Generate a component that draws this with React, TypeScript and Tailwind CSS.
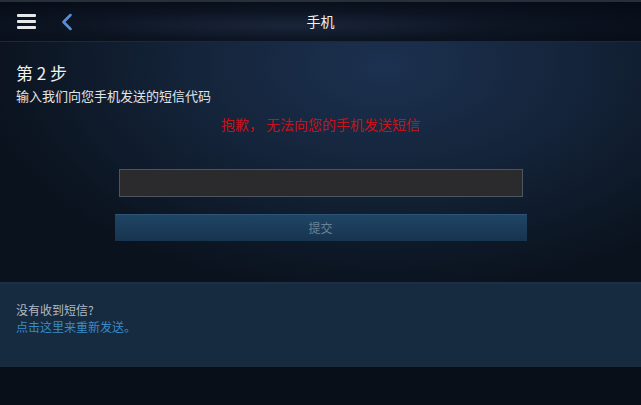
import { ChevronLeft } from "lucide-react";

const font = { fontFamily: '"Noto Sans CJK SC", "Liberation Sans", sans-serif' };

export default function App() {
  return (
    <div className="flex h-[405px] w-[641px] flex-col overflow-hidden bg-[#090f18]" style={font}>
      {/* header */}
      <div className="h-[2px] bg-[#272f3a]" />
      <div className="relative flex h-[40px] items-center border-b border-[#1b2a3b] bg-[radial-gradient(ellipse_at_45%_60%,#1a2539_0%,#0c1422_45%,#050b14_100%)] px-[17px]">
        <div className="flex w-[19px] flex-col gap-[3px]">
          <span className="h-[3px] rounded-[1px] bg-[#e6e8ea]" />
          <span className="h-[3px] rounded-[1px] bg-[#e6e8ea]" />
          <span className="h-[3px] rounded-[1px] bg-[#e6e8ea]" />
        </div>
        <ChevronLeft className="ml-[17px] text-[#5a8fd8]" size={28} strokeWidth={2.2} />
        <div className="absolute inset-x-0 top-0 flex h-full items-center justify-center text-[14px] text-[#eef0f2]">
          手机
        </div>
      </div>

      {/* main */}
      <div className="flex h-[240px] flex-col bg-[radial-gradient(ellipse_at_60%_10%,#1c3150_0%,#14243a_35%,#0a121d_75%)]">
        <div className="px-4 pt-[20px]">
          <div className="text-[17px] leading-[22px] text-[#eef0f2]">第 2 步</div>
          <div className="mt-[3px] text-[13px] leading-[18px] text-[#e2e5e8]">输入我们向您手机发送的短信代码</div>
        </div>
        <div className="mt-[10px] text-center text-[14px] leading-[18px] text-[#c8121a]">抱歉， 无法向您的手机发送短信</div>
        <div className="mt-[36px] flex justify-center">
          <div className="h-[28px] w-[404px] border border-[#4c565f] bg-[#2b2b2e]" />
        </div>
        <div className="mt-[17px] flex justify-center">
          <div className="flex h-[27px] w-[412px] items-center justify-center border-t border-[#2d5473] bg-[linear-gradient(180deg,#1f4565,#17344f)] text-[12px] text-[#6a8398]">
            提交
          </div>
        </div>
      </div>

      {/* footer panel */}
      <div className="flex h-[85px] flex-col border-t-[2px] border-b-[2px] border-t-[#1d2f45] border-b-[#1c2b3c] bg-[#162a40] px-4 pt-[17px]">
        <div className="text-[12px] leading-[17px] text-[#b2bac3]">没有收到短信?</div>
        <div className="text-[12px] leading-[17px] text-[#3b8bc4]">点击这里来重新发送。</div>
      </div>
      <div className="flex-1 bg-[#090f18]" />
    </div>
  );
}
